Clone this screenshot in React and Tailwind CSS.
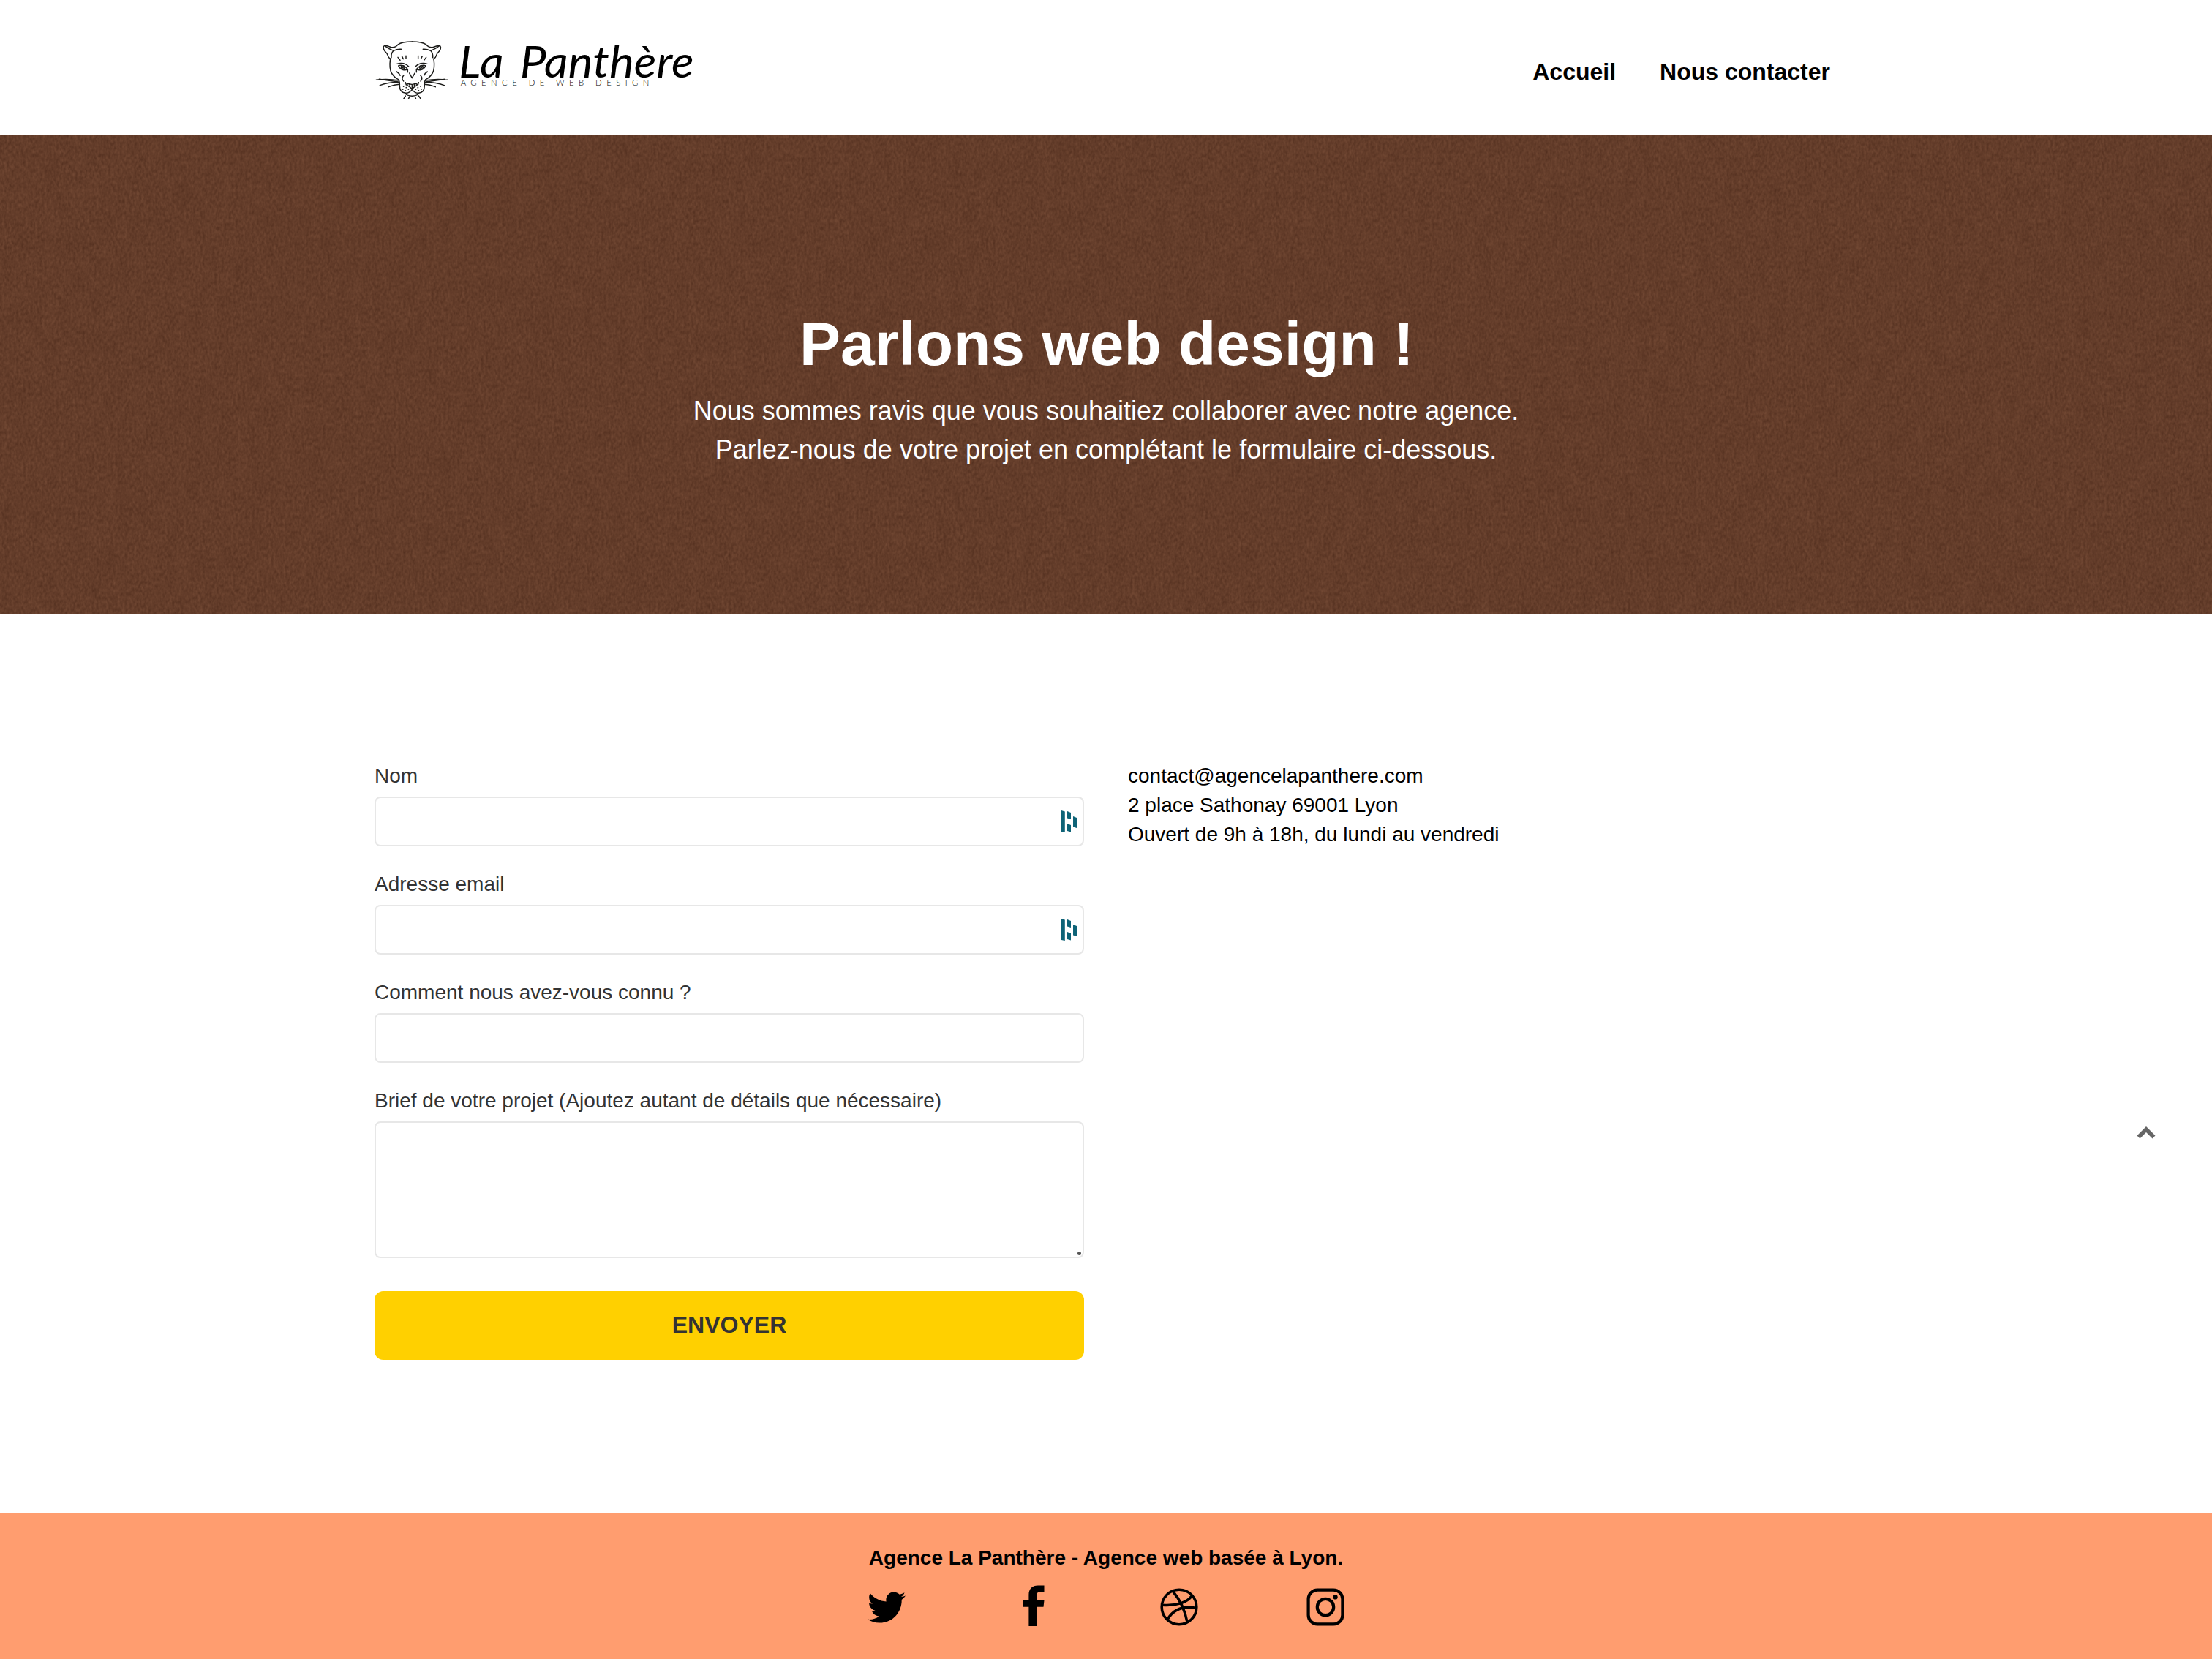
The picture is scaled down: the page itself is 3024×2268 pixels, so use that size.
import React from "react";

function PantherLogo() {
  return (
    <svg viewBox="30 30 1350 270" className="block h-[90px] w-[450px] overflow-visible" role="img" aria-label="La Panthère">
      <g fill="none" stroke="#1d1d1b" strokeWidth="4.4" strokeLinecap="round" strokeLinejoin="round">
        <path d="M190 51C160 51 145 53 132 63C126 70 118 76 106 74C94 71 86 66 78 67C71 69 71 78 76 86C80 94 87 96 89 104C91 112 95 118 102 122" />
        <path d="M190 51C220 51 235 53 248 63C254 70 262 76 274 74C286 71 294 66 302 67C309 69 309 78 304 86C300 94 293 96 291 104C289 112 285 118 278 122" />
        <path d="M78 68C90 78 102 84 114 88C123 84 135 81 145 82M114 88C106 96 104 106 105 116" />
        <path d="M302 68C290 78 278 84 266 88C257 84 245 81 235 82M266 88C274 96 276 106 275 116" />
        <path d="M101 121C97 150 98 165 106 180C114 192 124 202 134 206M279 121C283 150 282 165 274 180C266 192 256 202 246 206" />
        <path d="M132 115L141 127M148 110L154 122M165 109V119M248 115L239 127M232 110L226 122M215 109V119" />
        <path d="M128 142C145 136 166 140 176 153M252 142C235 136 214 140 204 153" />
        <path d="M134 150C144 145 160 148 172 164C162 170 144 170 134 150ZM246 150C236 145 220 148 208 164C218 170 236 170 246 150Z" />
        <circle cx="152" cy="156" r="7" />
        <circle cx="228" cy="156" r="7" />
        <path d="M172 164V176M208 164V176M179 180L190 200L201 180" />
        <path d="M127 174C134 178 138 183 141 190M253 174C246 178 242 183 239 190M156 188C148 197 147 205 155 213M224 188C232 197 233 205 225 213" />
        <path d="M163 218L166 228L176 222L181 230M217 218L214 228L204 222L199 230M178 222Q190 231 202 222M190 228V247M171 230Q182 236 190 247Q198 236 209 230" />
        <path d="M134 206C143 218 138 224 139 232C139 245 144 261 164 262C180 262 185 254 190 247C195 254 200 262 216 262C236 261 241 245 241 232C242 224 237 218 246 206" />
        <path d="M162 263C172 277 208 277 218 263M163 273L155 286M179 277L175 286M202 277L206 286M217 273L226 286" />
        <path d="M43 208Q90 202 136 210M58 230Q98 216 138 218M94 236Q118 227 138 226M55 205L134 216M337 208Q290 202 244 210M322 230Q282 216 242 218M286 236Q262 227 242 226M325 205L246 216" />
      </g>
      <g fill="#1d1d1b">
        <circle cx="152" cy="157" r="3.5" />
        <circle cx="228" cy="157" r="3.5" />
        <circle cx="155" cy="234" r="2.8" />
        <circle cx="166" cy="239" r="2.8" />
        <circle cx="152" cy="246" r="2.8" />
        <circle cx="163" cy="252" r="2.8" />
        <circle cx="175" cy="246" r="2.8" />
        <circle cx="225" cy="234" r="2.8" />
        <circle cx="214" cy="239" r="2.8" />
        <circle cx="228" cy="246" r="2.8" />
        <circle cx="217" cy="252" r="2.8" />
        <circle cx="205" cy="246" r="2.8" />
      </g>
      <g fontSize="180" className="fill-black font-['Lato',sans-serif] font-normal italic">
        <text x="382" y="198" textLength="184" lengthAdjust="spacingAndGlyphs">La</text>
        <text x="632" y="198" textLength="714" lengthAdjust="spacingAndGlyphs">Panthère</text>
      </g>
      <text x="389" y="232" textLength="773" fontSize="34" className="fill-black font-['Lato',sans-serif] font-light">
        AGENCE DE WEB DESIGN
      </text>
    </svg>
  );
}

function Header() {
  return (
    <header className="flex h-[184px] items-start justify-between pr-[522px] pl-[510px]">
      <a href="#" className="mt-[50px]">
        <PantherLogo />
      </a>
      <nav className="mt-[75px] flex gap-[60px] text-[32px] leading-[46px] font-bold text-black">
        <a href="#">Accueil</a>
        <a href="#">Nous contacter</a>
      </nav>
    </header>
  );
}

function Hero() {
  return (
    <section className="relative h-[656px] overflow-hidden bg-[#643d2a] text-center text-white">
      <svg className="absolute inset-0 h-full w-full" aria-hidden="true">
        <filter id="paper" x="0" y="0" width="100%" height="100%" colorInterpolationFilters="sRGB">
          <feTurbulence type="fractalNoise" baseFrequency="0.31 0.19" numOctaves="2" seed="4" result="grain" />
          <feTurbulence type="fractalNoise" baseFrequency="0.05 0.03" numOctaves="3" seed="9" result="fibre" />
          <feComposite in="grain" in2="fibre" operator="arithmetic" k2="0.8" k3="0.2" />
          <feColorMatrix values="0.17 0 0 0 0.305  0.135 0 0 0 0.17  0.11 0 0 0 0.109  0 0 0 0 1" />
        </filter>
        <rect width="100%" height="100%" filter="url(#paper)" />
      </svg>
      <div className="relative pt-[226px]">
        <h1 className="pl-[2px] text-[84px] leading-[120px] font-bold">Parlons web design !</h1>
        <p className="mt-[5px] text-[36px] leading-[53px]">
          Nous sommes ravis que vous souhaitiez collaborer avec notre agence.
          <br />
          Parlez-nous de votre projet en complétant le formulaire ci-dessous.
        </p>
      </div>
    </section>
  );
}

function AutofillMark() {
  return (
    <svg viewBox="0 0 21 30" className="absolute top-[19px] right-[10px] h-[30px] w-[21px]" fill="#0e6377" aria-hidden="true">
      <path d="M0 0L4.8 1.5V30L0 29Z" />
      <path d="M8 1L13 3V12L8 10.5ZM8 18L13 20V29.5L8 28Z" />
      <path d="M16 8L21 10V24L16 22.5Z" />
    </svg>
  );
}

function Field({ label, autofill }) {
  return (
    <label className="mb-8 block">
      <span className="mb-2 block">{label}</span>
      <span className="relative block">
        <input className="block h-[68px] w-full rounded-lg border-2 border-[#e7e7e7] bg-white px-6 outline-none" />
        {autofill && <AutofillMark />}
      </span>
    </label>
  );
}

function ContactForm() {
  return (
    <form className="w-[970px] text-[28px] leading-[40px] text-[#333]">
      <Field label="Nom" autofill />
      <Field label="Adresse email" autofill />
      <Field label="Comment nous avez-vous connu ?" />
      <label className="relative block">
        <span className="mb-2 block">Brief de votre projet (Ajoutez autant de détails que nécessaire)</span>
        <textarea className="block h-[187px] w-full resize-none rounded-lg border-2 border-[#e7e7e7] bg-white outline-none" />
        <span className="absolute right-[4px] bottom-[4px] h-[5px] w-[5px] rounded-full bg-[#555]" />
      </label>
      <button type="button" className="mt-[45px] block h-[94px] w-full rounded-xl bg-[#ffd000] pb-[2px] text-[32px] font-bold">
        ENVOYER
      </button>
    </form>
  );
}

function Social() {
  return (
    <div className="mt-[11px] flex h-[62px] w-[652px] items-end text-black">
      <svg viewBox="0 48 512 416" className="mb-[4px] h-[43px] w-[52px]" fill="currentColor" aria-label="Twitter">
        <path d="M459.37 151.716c.325 4.548.325 9.097.325 13.645 0 138.72-105.583 298.558-298.558 298.558-59.452 0-114.68-17.219-161.137-47.106 8.447.974 16.568 1.299 25.34 1.299 49.055 0 94.213-16.568 130.274-44.832-46.132-.975-84.792-31.188-98.112-72.772 6.498.974 12.995 1.624 19.818 1.624 9.421 0 18.843-1.3 27.614-3.573-48.081-9.747-84.143-51.98-84.143-102.985v-1.299c13.969 7.797 30.214 12.67 47.431 13.319-28.264-18.843-46.781-51.005-46.781-87.391 0-19.492 5.197-37.36 14.294-52.954 51.655 63.675 129.3 105.258 216.365 109.807-1.624-7.797-2.599-15.918-2.599-24.04 0-57.828 46.782-104.934 104.934-104.934 30.213 0 57.502 12.67 76.67 33.137 23.715-4.548 46.456-13.32 66.599-25.34-7.798 24.366-24.366 44.833-46.132 57.827 21.117-2.273 41.584-8.122 60.426-16.243-14.292 20.791-32.161 39.308-52.628 54.253z" />
      </svg>
      <svg viewBox="0 0 30 56" className="ml-[160px] h-[56px] w-[30px]" fill="currentColor" aria-label="Facebook">
        <path d="M29.5 .5V9.6H23.5C20 9.6 19.4 11.2 19.4 14V20.7H29.5L28.5 29.7H19.4V56H8.4V29.7H0V20.7H8.4V13.6C8.4 5 13 .5 21 .5Z" />
      </svg>
      <svg viewBox="0 0 52 52" className="ml-[158px] h-[52px] w-[52px]" fill="none" stroke="currentColor" strokeWidth="3.6" aria-label="Dribbble">
        <circle cx="26" cy="26" r="23.8" />
        <path d="M17.5 4.5C27 16 34 30 37 46.5M3 23.2C22 24.5 37 20 43.5 10.5M10 43C18 29 32 24 49.5 27.5" />
      </svg>
      <svg viewBox="0 0 52 52" className="ml-auto h-[52px] w-[52px]" fill="none" stroke="currentColor" strokeWidth="4.2" aria-label="Instagram">
        <rect x="2.6" y="2.6" width="46.8" height="46.8" rx="12.5" />
        <circle cx="26" cy="26" r="11.2" />
        <circle cx="39.6" cy="12.4" r="3.1" fill="currentColor" stroke="none" />
      </svg>
    </div>
  );
}

export default function App() {
  return (
    <div className="relative flex h-[2268px] w-[3024px] flex-col overflow-hidden bg-white font-['Liberation_Sans',Arial,sans-serif]">
      <Header />
      <Hero />
      <main className="flex h-[1229px] gap-[60px] pt-[201px] pl-[512px]">
        <ContactForm />
        <address className="text-[28px] leading-[40px] text-black not-italic">
          contact@agencelapanthere.com
          <br />2 place Sathonay 69001 Lyon
          <br />
          Ouvert de 9h à 18h, du lundi au vendredi
        </address>
      </main>
      <footer className="flex flex-1 flex-col items-center bg-[#ff9d6f] pt-[41px]">
        <p className="text-[28px] leading-[40px] font-bold text-black">Agence La Panthère - Agence web basée à Lyon.</p>
        <Social />
      </footer>
      <a href="#" aria-label="Haut de page" className="absolute top-[1540px] left-[2921px]">
        <svg viewBox="0 0 26 18" className="block h-[18px] w-[26px]" fill="none" stroke="#666" strokeWidth="5.6">
          <path d="M2.5 14.5L13 4L23.5 14.5" />
        </svg>
      </a>
    </div>
  );
}
